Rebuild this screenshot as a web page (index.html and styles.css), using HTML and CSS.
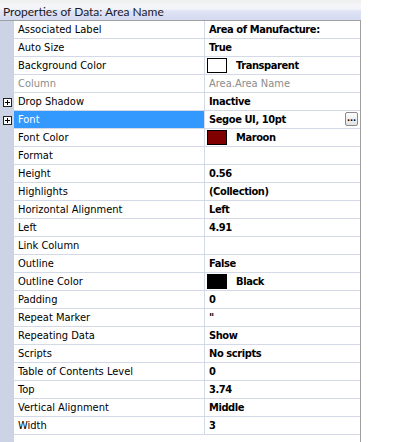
FILE: index.html
```html
<!DOCTYPE html>
<html>
<head>
<meta charset="utf-8">
<link rel="stylesheet" href="styles.css">
</head>
<body>
<div class="panel">
  <div class="title">Properties of Data: Area Name</div>
  <div class="grid">
    <div class="row"><div class="gutter"></div><div class="name">Associated Label</div><div class="value">Area of Manufacture:</div></div>
    <div class="row"><div class="gutter"></div><div class="name">Auto Size</div><div class="value">True</div></div>
    <div class="row"><div class="gutter"></div><div class="name">Background Color</div><div class="value"><span class="swatch white"></span>Transparent</div></div>
    <div class="row"><div class="gutter"></div><div class="name muted">Column</div><div class="value muted">Area.Area Name</div></div>
    <div class="row"><div class="gutter"><svg class="plus" width="9" height="9" viewBox="0 0 9 9"><rect x="0.5" y="0.5" width="8" height="8" fill="#fff" stroke="#222"/><path d="M2 4.5H7M4.5 2V7" stroke="#000"/></svg></div><div class="name">Drop Shadow</div><div class="value">Inactive</div></div>
    <div class="row"><div class="gutter"><svg class="plus" width="9" height="9" viewBox="0 0 9 9"><rect x="0.5" y="0.5" width="8" height="8" fill="#fff" stroke="#222"/><path d="M2 4.5H7M4.5 2V7" stroke="#000"/></svg></div><div class="name selected">Font</div><div class="value">Segoe UI, 10pt<span class="ellipsis">...</span></div></div>
    <div class="row"><div class="gutter"></div><div class="name">Font Color</div><div class="value"><span class="swatch maroon"></span>Maroon</div></div>
    <div class="row"><div class="gutter"></div><div class="name">Format</div><div class="value"></div></div>
    <div class="row"><div class="gutter"></div><div class="name">Height</div><div class="value">0.56</div></div>
    <div class="row"><div class="gutter"></div><div class="name">Highlights</div><div class="value">(Collection)</div></div>
    <div class="row"><div class="gutter"></div><div class="name">Horizontal Alignment</div><div class="value">Left</div></div>
    <div class="row"><div class="gutter"></div><div class="name">Left</div><div class="value">4.91</div></div>
    <div class="row"><div class="gutter"></div><div class="name">Link Column</div><div class="value"></div></div>
    <div class="row"><div class="gutter"></div><div class="name">Outline</div><div class="value">False</div></div>
    <div class="row"><div class="gutter"></div><div class="name">Outline Color</div><div class="value"><span class="swatch black"></span>Black</div></div>
    <div class="row"><div class="gutter"></div><div class="name">Padding</div><div class="value">0</div></div>
    <div class="row"><div class="gutter"></div><div class="name">Repeat Marker</div><div class="value">"</div></div>
    <div class="row"><div class="gutter"></div><div class="name">Repeating Data</div><div class="value">Show</div></div>
    <div class="row"><div class="gutter"></div><div class="name">Scripts</div><div class="value">No scripts</div></div>
    <div class="row"><div class="gutter"></div><div class="name">Table of Contents Level</div><div class="value">0</div></div>
    <div class="row"><div class="gutter"></div><div class="name">Top</div><div class="value">3.74</div></div>
    <div class="row"><div class="gutter"></div><div class="name">Vertical Alignment</div><div class="value">Middle</div></div>
    <div class="row"><div class="gutter"></div><div class="name">Width</div><div class="value">3</div></div>
  </div>
</div>
</body>
</html>
```

FILE: styles.css
```css
html, body {
  margin: 0;
  padding: 0;
  background: #fff;
}
.panel {
  width: 361px;
  height: 442px;
  box-sizing: border-box;
  display: flex;
  flex-direction: column;
}
.title {
  height: 20px;
  box-sizing: border-box;
  padding: 3px 0 0 3px;
  font-family: Lato, "Noto Sans", sans-serif;
  font-size: 12px;
  line-height: 17px;
  color: #1a1a2a;
  background: linear-gradient(#f0f0f0 0px, #f0f0f0 3px, #f6f6f9 4px, #f3f4f8 9px, #dfe3f4 11px, #d5dbf0 19px);
}
.grid {
  flex: 1;
  border-top: 1px solid #a0a0a0;
  border-right: 1px solid #a0a0a0;
  background: linear-gradient(to right, #cbd3e5 14px, #fff 14px);
}
.row {
  display: grid;
  grid-template-columns: 14px 191px 1fr;
  height: 18px;
  font-family: "DejaVu Sans Condensed", "DejaVu Sans", sans-serif;
  font-size: 11px;
  color: #000;
}
.gutter {
  background: #cbd3e5;
  display: flex;
  align-items: center;
  padding-left: 3px;
}
.plus {
  display: block;
}
.name {
  border-right: 1px solid #d3d9e6;
  border-bottom: 1px solid #d3d9e6;
  padding-left: 4px;
  line-height: 17px;
  white-space: nowrap;
  overflow: hidden;
}
.value {
  border-bottom: 1px solid #d3d9e6;
  padding-left: 4px;
  line-height: 17px;
  font-weight: bold;
  letter-spacing: -0.4px;
  display: flex;
  align-items: center;
  white-space: nowrap;
  position: relative;
}
.muted {
  color: #8c8c8c;
  font-weight: normal;
  letter-spacing: 0;
}
.selected {
  background: #3399ff;
  color: #fff;
}
.swatch {
  width: 18px;
  height: 13px;
  border: 1px solid #000;
  margin-left: -2px;
  margin-right: 9px;
  box-sizing: content-box;
}
.swatch.white { background: #fff; }
.swatch.maroon { background: #800000; }
.swatch.black { background: #000; }
.ellipsis {
  position: absolute;
  right: 2px;
  top: 1px;
  width: 11px;
  height: 12px;
  border: 1px solid #8a8a8a;
  border-radius: 2px;
  background: linear-gradient(#fdfdfd, #e2e2e2);
  font-size: 9px;
  line-height: 10px;
  letter-spacing: 0;
  text-align: center;
  color: #000;
  font-weight: bold;
}
```
